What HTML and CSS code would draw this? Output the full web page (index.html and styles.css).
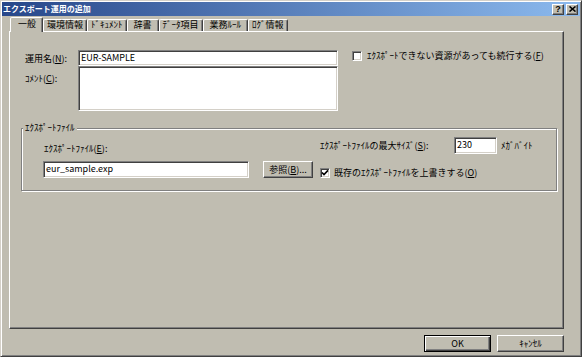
FILE: index.html
```html
<!DOCTYPE html>
<html lang="ja">
<head>
<meta charset="utf-8">
<title>エクスポート運用の追加</title>
<link rel="stylesheet" href="styles.css">
</head>
<body>
<div class="dialog">
    <div class="titlebar">
        <span class="title">エクスポート運用の追加</span>
        <div class="title-buttons">
            <span class="title-btn help">?</span>
            <span class="title-btn">
                <svg width="7" height="6" viewBox="0 0 7 6"><path d="M0.5 0.5 L6.5 5.5 M6.5 0.5 L0.5 5.5" stroke="#000" stroke-width="1.6"/></svg>
            </span>
        </div>
    </div>

    <div class="content">
        <div class="tabs">
            <div class="tab selected">一般</div>
            <div class="tab">環境情報</div>
            <div class="tab">ﾄﾞｷｭﾒﾝﾄ</div>
            <div class="tab wide">辞書</div>
            <div class="tab">ﾃﾞｰﾀ項目</div>
            <div class="tab wide">業務ﾙｰﾙ</div>
            <div class="tab">ﾛｸﾞ情報</div>
        </div>

        <div class="panel">
            <div class="general">
                <label class="lbl name-lbl">運用名(<u>N</u>):</label>
                <div class="field name">EUR-SAMPLE</div>
                <div class="check-row top">
                    <span class="checkbox"></span>
                    <span>ｴｸｽﾎﾟｰﾄできない資源があっても続行する(<u>F</u>)</span>
                </div>
                <label class="lbl comment-lbl">ｺﾒﾝﾄ(<u>C</u>):</label>
                <div class="field comment"></div>
            </div>

            <fieldset class="group">
                <legend>ｴｸｽﾎﾟｰﾄﾌｧｲﾙ</legend>
                <div class="group-body">
                    <label class="lbl file-lbl">ｴｸｽﾎﾟｰﾄﾌｧｲﾙ(<u>E</u>):</label>
                    <div class="size-row">
                        <label class="lbl size-lbl">ｴｸｽﾎﾟｰﾄﾌｧｲﾙの最大ｻｲｽﾞ(<u>S</u>):</label>
                        <div class="field size">230</div>
                        <span class="unit">ﾒｶﾞﾊﾞｲﾄ</span>
                    </div>
                    <div class="field file">eur_sample.exp</div>
                    <button class="btn browse">参照(<u>B</u>)...</button>
                    <div class="check-row overwrite">
                        <span class="checkbox">
                            <svg width="8" height="8" viewBox="0 0 8 8"><path d="M1 3.5 L3 5.6 L7 1.4" fill="none" stroke="#000" stroke-width="1.6"/></svg>
                        </span>
                        <span>既存のｴｸｽﾎﾟｰﾄﾌｧｲﾙを上書きする(<u>O</u>)</span>
                    </div>
                </div>
            </fieldset>
        </div>
    </div>

    <div class="footer">
        <button class="btn default">OK</button>
        <button class="btn">ｷｬﾝｾﾙ</button>
    </div>
</div>
</body>
</html>
```

FILE: styles.css
```css
:root {
    --face: #c0bdb1;
    --light: #fff;
    --shadow: #808080;
    --dark: #404040;
}

* {
    box-sizing: border-box;
}

body {
    margin: 0;
    font-family: "Noto Sans CJK JP", sans-serif;
    font-size: 9px;
    color: #000;
    background: var(--face);
}

u {
    text-decoration-thickness: 1px;
    text-underline-offset: 1px;
}

.dialog {
    width: 582px;
    height: 357px;
    display: flex;
    flex-direction: column;
    background: var(--face);
    border: 1px solid;
    border-color: #d4d0c8 var(--dark) var(--dark) #d4d0c8;
    box-shadow: inset 1px 1px var(--light), inset -1px -1px var(--shadow);
    padding: 1px;
}

/* title bar */
.titlebar {
    height: 14px;
    flex: none;
    display: flex;
    align-items: center;
    justify-content: space-between;
    padding: 0 2px 0 1px;
    background: linear-gradient(to right, #27478a, #8cbaee);
}

.title {
    color: #fff;
    font-weight: bold;
    font-size: 8px;
    line-height: 14px;
}

.title-buttons {
    display: flex;
    gap: 2px;
}

.title-btn {
    width: 12px;
    height: 11px;
    display: flex;
    align-items: center;
    justify-content: center;
    background: var(--face);
    border: 1px solid;
    border-color: var(--light) var(--dark) var(--dark) var(--light);
    box-shadow: inset -1px -1px var(--shadow);
}

.title-btn.help {
    font-family: "Liberation Sans", sans-serif;
    font-weight: bold;
    font-size: 9px;
    line-height: 9px;
}

/* tabs */
.content {
    flex: none;
    display: flex;
    flex-direction: column;
    padding: 0 16px 0 7px;
}

.tabs {
    height: 15px;
    display: flex;
    align-items: flex-end;
    padding-left: 3px;
}

.tab {
    height: 12px;
    line-height: 10px;
    padding: 0 3px;
    white-space: nowrap;
    border: 1px solid;
    border-bottom: 0;
    border-color: var(--light) var(--dark) transparent var(--light);
    box-shadow: inset -1px 0 var(--shadow);
    border-radius: 2px 2px 0 0;
}

.tab.wide {
    padding: 0 6px;
}

.tab.selected {
    height: 15px;
    line-height: 11px;
    margin: 0 0 -1px -2px;
    padding: 0 6px 0 7px;
    position: relative;
    z-index: 1;
    background: var(--face);
}

/* tab page */
.panel {
    height: 298px;
    border: 1px solid;
    border-color: var(--light) var(--dark) var(--dark) var(--light);
    box-shadow: inset -1px -1px var(--shadow);
    padding: 18px 7px 0 11px;
}

.lbl {
    line-height: 11px;
    white-space: nowrap;
}

.general {
    display: grid;
    grid-template-columns: 53px 260px 14px auto;
    grid-template-rows: 16px 45px;
    margin-left: 4px;
}

.name-lbl {
    align-self: center;
}

.comment-lbl {
    grid-row: 2;
    grid-column: 1;
    align-self: start;
    margin-top: 7px;
}

.field {
    background: #fff;
    border: 1px solid;
    border-color: var(--shadow) var(--light) var(--light) var(--shadow);
    box-shadow: inset 1px 1px var(--dark), inset -1px -1px #d4d0c8;
    padding: 0 2px;
    line-height: 14px;
    white-space: nowrap;
}

.field.comment {
    grid-row: 2;
    grid-column: 2;
}

.check-row {
    display: flex;
    align-items: center;
    gap: 5px;
    line-height: 11px;
    white-space: nowrap;
}

.check-row.top {
    grid-row: 1;
    grid-column: 4;
    align-self: start;
}

.checkbox {
    width: 10px;
    height: 10px;
    flex: none;
    display: flex;
    align-items: center;
    justify-content: center;
    background: #fff;
    border: 1px solid;
    border-color: var(--shadow) var(--light) var(--light) var(--shadow);
    box-shadow: inset 1px 1px var(--dark), inset -1px -1px #d4d0c8;
}

/* group box */
.group {
    width: 536px;
    margin: 11px 0 0;
    padding: 0;
    min-inline-size: 0;
    border: 1px solid var(--shadow);
    box-shadow: 1px 1px var(--light), inset 1px 1px var(--light);
}

.group legend {
    margin-left: 1px;
    padding: 0 2px;
    line-height: 12px;
    background: var(--face);
}

.group-body {
    display: grid;
    grid-template-columns: 220px 57px 1fr;
    grid-template-rows: 17px 17px;
    row-gap: 7px;
    padding: 3px 0 12px 21px;
}

.file-lbl {
    grid-column: 1 / 3;
    align-self: end;
    padding-left: 1px;
}

.size-row {
    grid-column: 3;
    display: flex;
    align-items: center;
}

.size-lbl {
    width: 134px;
}

.field.size {
    width: 43px;
    height: 17px;
    line-height: 13px;
}

.unit {
    margin-left: 4px;
}

.field.file {
    width: 206px;
    height: 17px;
}

.check-row.overwrite {
    align-self: end;
    gap: 4px;
}

/* buttons */
.btn {
    font: inherit;
    color: #000;
    height: 17px;
    padding: 0;
    background: var(--face);
    border: 1px solid;
    border-color: var(--light) var(--dark) var(--dark) var(--light);
    box-shadow: inset -1px -1px var(--shadow);
}

.btn.browse {
    width: 50px;
}

.footer {
    flex: 1;
    display: flex;
    justify-content: flex-end;
    align-items: flex-start;
    gap: 6px;
    padding: 6px 16px 0 0;
}

.footer .btn {
    width: 67px;
}

.btn.default {
    border-color: #000;
    box-shadow: inset 1px 1px var(--light), inset -1px -1px var(--dark), inset -2px -2px var(--shadow);
}
```
